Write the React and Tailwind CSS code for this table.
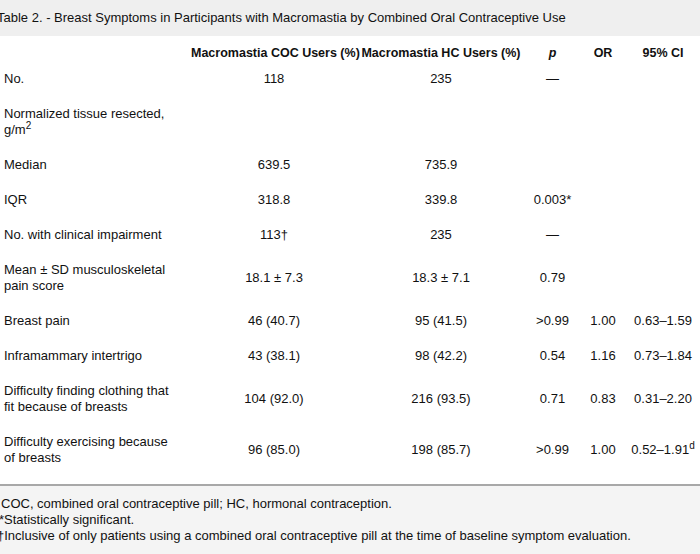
import React from "react"

const rows = [
  { label: "No.", coc: "118", hc: "235", p: "—" },
  {
    label: (
      <>
        Normalized tissue resected, g/m<sup className="text-[10px] leading-none">2</sup>
      </>
    ),
    double: true,
  },
  { label: "Median", coc: "639.5", hc: "735.9" },
  { label: "IQR", coc: "318.8", hc: "339.8", p: "0.003*" },
  { label: "No. with clinical impairment", coc: "113†", hc: "235", p: "—" },
  { label: "Mean ± SD musculoskeletal pain score", coc: "18.1 ± 7.3", hc: "18.3 ± 7.1", p: "0.79", double: true },
  { label: "Breast pain", coc: "46 (40.7)", hc: "95 (41.5)", p: ">0.99", or: "1.00", ci: "0.63–1.59" },
  { label: "Inframammary intertrigo", coc: "43 (38.1)", hc: "98 (42.2)", p: "0.54", or: "1.16", ci: "0.73–1.84" },
  {
    label: "Difficulty finding clothing that fit because of breasts",
    coc: "104 (92.0)",
    hc: "216 (93.5)",
    p: "0.71",
    or: "0.83",
    ci: "0.31–2.20",
    double: true,
  },
  {
    label: "Difficulty exercising because of breasts",
    coc: "96 (85.0)",
    hc: "198 (85.7)",
    p: ">0.99",
    or: "1.00",
    ci: (
      <>
        0.52–1.91<sup className="text-[10px] leading-none">d</sup>
      </>
    ),
    double: true,
  },
]

const cols = "grid grid-cols-[191px_166px_168px_55px_46px_74px]"

export default function App() {
  return (
    <div className="w-[700px] h-[554px] overflow-hidden bg-white text-[#111] font-['Liberation_Sans',Arial,sans-serif]">
      <div className="h-[36px] bg-[#efefef] flex items-center">
        <div className="-ml-[3px] text-[13px] leading-[16px] whitespace-nowrap">
          Table 2. - Breast Symptoms in Participants with Macromastia by Combined Oral Contraceptive Use
        </div>
      </div>

      <div className={`${cols} pt-[9px] h-[25px] text-[12.5px] leading-[16px] font-bold`}>
        <div />
        <div className="text-center whitespace-nowrap">Macromastia COC Users (%)</div>
        <div className="text-center whitespace-nowrap">Macromastia HC Users (%)</div>
        <div className="text-center italic">p</div>
        <div className="text-center">OR</div>
        <div className="text-center">95% CI</div>
      </div>

      {rows.map((r, i) => (
        <div
          key={i}
          className={`${cols} items-center text-[13px] leading-[16px] ${r.double ? "h-[51px]" : "h-[35px]"}`}
        >
          <div className="pl-[4px] pr-[17px]">{r.label}</div>
          <div className="text-center">{r.coc}</div>
          <div className="text-center">{r.hc}</div>
          <div className="text-center">{r.p}</div>
          <div className="text-center">{r.or}</div>
          <div className="text-center whitespace-nowrap">{r.ci}</div>
        </div>
      ))}

      <div className="mt-[9px] border-t-2 border-[#a8a8a8] bg-[#f4f4f4] h-[70px] pt-[10px] text-[13px] leading-[16px]">
        <div className="pl-[1px] whitespace-nowrap">COC, combined oral contraceptive pill; HC, hormonal contraception.</div>
        <div className="-ml-[1px] whitespace-nowrap">*Statistically significant.</div>
        <div className="-ml-[3px] whitespace-nowrap">
          †Inclusive of only patients using a combined oral contraceptive pill at the time of baseline symptom evaluation.
        </div>
      </div>
    </div>
  )
}
